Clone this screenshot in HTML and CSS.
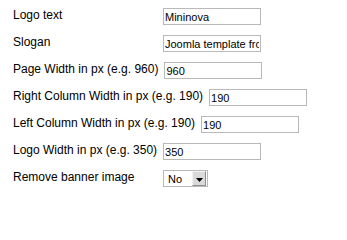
FILE: index.html
```html
<!DOCTYPE html>
<html>
<head>
<meta charset="utf-8">
<link rel="stylesheet" href="styles.css">
</head>
<body>
<div class="params">
  <div class="row"><label class="lbl">Logo text</label><input class="txt" type="text" value="Mininova"></div>
  <div class="row"><label class="lbl">Slogan</label><input class="txt" type="text" value="Joomla template from"></div>
  <div class="row"><label class="lbl">Page Width in px (e.g. 960)</label><input class="txt" type="text" value="960"></div>
  <div class="row"><label class="lbl">Right Column Width in px (e.g. 190)</label><input class="txt" type="text" value="190"></div>
  <div class="row"><label class="lbl">Left Column Width in px (e.g. 190)</label><input class="txt" type="text" value="190"></div>
  <div class="row"><label class="lbl">Logo Width in px (e.g. 350)</label><input class="txt" type="text" value="350"></div>
  <div class="row"><label class="lbl">Remove banner image</label>
    <div class="sel"><span class="sel-val">No</span><span class="sel-btn"><svg width="7" height="4" viewBox="0 0 7 4"><path d="M0 0H7L3.5 4Z" fill="#000"/></svg></span></div>
  </div>
</div>
</body>
</html>
```
FILE: styles.css
```css
html, body {
  margin: 0;
  padding: 0;
  background: #fff;
}
body {
  font-family: "Liberation Sans", Arial, sans-serif;
  font-size: 12px;
  color: #000;
}
.params {
  display: flex;
  flex-direction: column;
  gap: 10px;
  padding: 8px 0 0 13px;
}
.row {
  display: flex;
  align-items: flex-start;
  height: 17px;
}
.lbl {
  min-width: 144px;
  margin-right: 6px;
  line-height: 15px;
  white-space: nowrap;
}
.txt {
  box-sizing: border-box;
  width: 98px;
  height: 17px;
  margin: 0;
  padding: 1px 1px 0 1px;
  border: 1px solid #b9b9b9;
  font-family: "Liberation Sans", Arial, sans-serif;
  font-size: 11px;
  color: #000;
  background: #fff;
  outline: none;
}
.sel {
  box-sizing: border-box;
  width: 45px;
  height: 17px;
  border: 1px solid #b9b9b9;
  display: flex;
  align-items: stretch;
  background: #fff;
}
.sel-val {
  flex: 1;
  padding: 1px 0 0 4px;
  font-size: 11px;
  line-height: 14px;
}
.sel-btn {
  box-sizing: border-box;
  width: 14px;
  margin-right: 1px;
  background: #dadada;
  border: 1px solid;
  border-color: #f4f4f4 #8e8e8e #8e8e8e #f4f4f4;
  display: flex;
  align-items: center;
  justify-content: center;
  padding-top: 2px;
}
.sel-btn svg {
  display: block;
}
```
